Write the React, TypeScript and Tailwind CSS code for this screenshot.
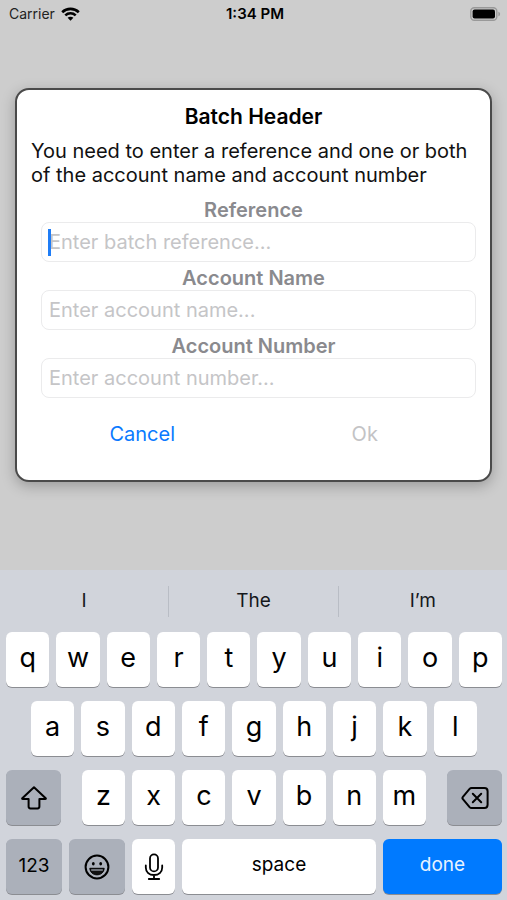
const fields = [
  { id: "reference", label: "Reference", placeholder: "Enter batch reference...", focused: true },
  { id: "account-name", label: "Account Name", placeholder: "Enter account name...", focused: false },
  { id: "account-number", label: "Account Number", placeholder: "Enter account number...", focused: false },
];

const suggestions = ["I", "The", "I’m"];

const topRow = ["q", "w", "e", "r", "t", "y", "u", "i", "o", "p"];
const homeRow = ["a", "s", "d", "f", "g", "h", "j", "k", "l"];
const bottomRow = ["z", "x", "c", "v", "b", "n", "m"];

const keyBase = "flex h-[55px] items-center justify-center rounded-md shadow-[0_1px_0_#8b8d92]";

function StatusBar() {
  return (
    <header className="grid h-7 grid-cols-3 items-center pl-[9px] pr-1.5 text-sm text-[#222]">
      <div className="flex items-center gap-1.5">
        <span>Carrier</span>
        <svg width="19" height="14" viewBox="0 0 19 14" fill="none" stroke="#000" strokeWidth="2.6" aria-label="Wi-Fi">
          <path d="M1.2 5.2C5.8 0.7 13.2 0.7 17.8 5.2" />
          <path d="M4.3 8.4C7.2 5.6 11.8 5.6 14.7 8.4" />
          <path d="M9.5 13.8L6.6 10.8C8.2 9.3 10.8 9.3 12.4 10.8Z" fill="#000" stroke="none" />
        </svg>
      </div>
      <span className="text-center text-[15px] font-semibold text-black">1:34 PM</span>
      <svg className="justify-self-end" width="31" height="14" viewBox="0 0 31 14" aria-label="Battery full">
        <rect x="0.8" y="0.8" width="26" height="12.4" rx="3.5" fill="none" stroke="#999" strokeWidth="1.4" />
        <rect x="2.6" y="2.6" width="22.4" height="8.8" rx="2" fill="#000" />
        <path d="M28.4 4.7C30.6 5.4 30.6 8.6 28.4 9.3Z" fill="#999" />
      </svg>
    </header>
  );
}

function BatchDialog() {
  return (
    <form
      role="dialog"
      aria-labelledby="batch-title"
      className="mx-[15px] mt-[60px] rounded-[14px] border-2 border-[#4a4a4a] bg-white px-3.5 pt-[15px] pb-[34px] text-xl leading-6 shadow-[0_4px_14px_rgba(0,0,0,0.25)]"
    >
      <h1 id="batch-title" className="text-center text-[21px] font-semibold text-black">
        Batch Header
      </h1>
      <p className="mt-2.5 text-[#111]">
        You need to enter a reference and one or both of the account name and account number
      </p>

      <div className="mt-[11px] flex flex-col gap-1">
        {fields.map((field) => (
          <div key={field.id}>
            <label htmlFor={field.id} className="block text-center font-semibold text-[#8a8a8e]">
              {field.label}
            </label>
            <div className="relative ml-2.5">
              <input
                id={field.id}
                type="text"
                placeholder={field.placeholder}
                className="h-10 w-full rounded-lg border border-[#ebebec] bg-white px-[7px] outline-none placeholder:text-[#c5c5c7]"
              />
              {field.focused && <span className="absolute top-[7px] left-[7px] h-[27px] w-[3px] bg-[#1f7df6]" />}
            </div>
          </div>
        ))}
      </div>

      <div className="mt-6 grid grid-cols-2 justify-items-center">
        <button type="button" className="text-[#0a7aff]">
          Cancel
        </button>
        <button type="submit" disabled className="text-[#c3c3c5]">
          Ok
        </button>
      </div>
    </form>
  );
}

function Letters({ letters }: { letters: string[] }) {
  return letters.map((letter) => (
    <button key={letter} type="button" className={`${keyBase} min-w-0 flex-1 bg-white pb-0.5 text-[27px]`}>
      {letter}
    </button>
  ));
}

function Keyboard() {
  return (
    <section aria-label="Keyboard" className="mt-auto bg-[#d1d4db] pb-1.5 text-black">
      <div className="flex h-[62px] items-center divide-x divide-[#b9bdc5]">
        {suggestions.map((word) => (
          <button key={word} type="button" className="h-[31px] flex-1 text-[19px] text-[#16181c]">
            {word}
          </button>
        ))}
      </div>

      <div className="flex flex-col gap-3.5 pr-[5px] pl-1.5">
        <div className="flex gap-[7px]">
          <Letters letters={topRow} />
        </div>

        <div className="flex gap-[7px] px-[25px]">
          <Letters letters={homeRow} />
        </div>

        <div className="flex justify-between gap-[21px]">
          <button type="button" aria-label="Shift" className={`${keyBase} w-[55px] shrink-0 bg-[#abb0ba]`}>
            <svg width="28" height="26" viewBox="0 0 28 26" fill="none" stroke="#000" strokeWidth="2" strokeLinejoin="round">
              <path d="M14 2.2L2.3 13.2Q1.7 14 2.8 14H8.6V21.6Q8.6 23.4 10.4 23.4H17.6Q19.4 23.4 19.4 21.6V14H25.2Q26.3 14 25.7 13.2Z" />
            </svg>
          </button>
          <div className="flex flex-1 gap-[7px]">
            <Letters letters={bottomRow} />
          </div>
          <button type="button" aria-label="Delete" className={`${keyBase} w-[55px] shrink-0 bg-[#abb0ba]`}>
            <svg width="28" height="24" viewBox="0 0 28 24" fill="none" stroke="#000" strokeWidth="2" strokeLinecap="round" strokeLinejoin="round">
              <path d="M10.6 2H23.4Q26.6 2 26.6 5.2V18.8Q26.6 22 23.4 22H10.6Q9.4 22 8.6 21.1L1.9 13.2Q0.9 12 1.9 10.8L8.6 2.9Q9.4 2 10.6 2Z" />
              <path d="M11.8 7.8L20.2 16.2M20.2 7.8L11.8 16.2" />
            </svg>
          </button>
        </div>

        <div className="flex gap-[7px]">
          <button type="button" className={`${keyBase} w-14 shrink-0 bg-[#abb0ba] text-[19px]`}>
            123
          </button>
          <button type="button" aria-label="Emoji" className={`${keyBase} w-14 shrink-0 bg-[#abb0ba]`}>
            <svg width="26" height="26" viewBox="0 0 26 26" fill="none" stroke="#000">
              <circle cx="13" cy="13" r="11.4" strokeWidth="2" />
              <ellipse cx="9.3" cy="9.8" rx="1.4" ry="1.8" fill="#000" stroke="none" />
              <ellipse cx="16.7" cy="9.8" rx="1.4" ry="1.8" fill="#000" stroke="none" />
              <path d="M5.8 14.3H20.2C19.8 18.5 16.8 20.8 13 20.8S6.2 18.5 5.8 14.3Z" fill="#111" strokeWidth="1" strokeLinejoin="round" />
              <path d="M7.2 16H18.8" stroke="#777b83" strokeWidth="1.8" />
            </svg>
          </button>
          <button type="button" aria-label="Dictate" className={`${keyBase} w-[43px] shrink-0 bg-white`}>
            <svg width="20" height="28" viewBox="0 0 20 28" fill="none" stroke="#000" strokeWidth="1.8" strokeLinecap="round">
              <rect x="6" y="1.4" width="8" height="17" rx="4" />
              <path d="M1.8 12.5V14.5C1.8 19.2 5.3 22 10 22S18.2 19.2 18.2 14.5V12.5M10 22V26M4.8 26H15.2" />
            </svg>
          </button>
          <button type="button" className={`${keyBase} flex-1 bg-white pb-0.5 text-[19px]`}>
            space
          </button>
          <button type="button" className={`${keyBase} w-[119px] shrink-0 bg-[#007aff] pb-0.5 text-[19px] text-[#e8f3ff]`}>
            done
          </button>
        </div>
      </div>
    </section>
  );
}

export default function App() {
  return (
    <main className="flex min-h-screen flex-col bg-[#cdcdcd] font-['Inter','Liberation_Sans',sans-serif]">
      <StatusBar />
      <BatchDialog />
      <Keyboard />
    </main>
  );
}
